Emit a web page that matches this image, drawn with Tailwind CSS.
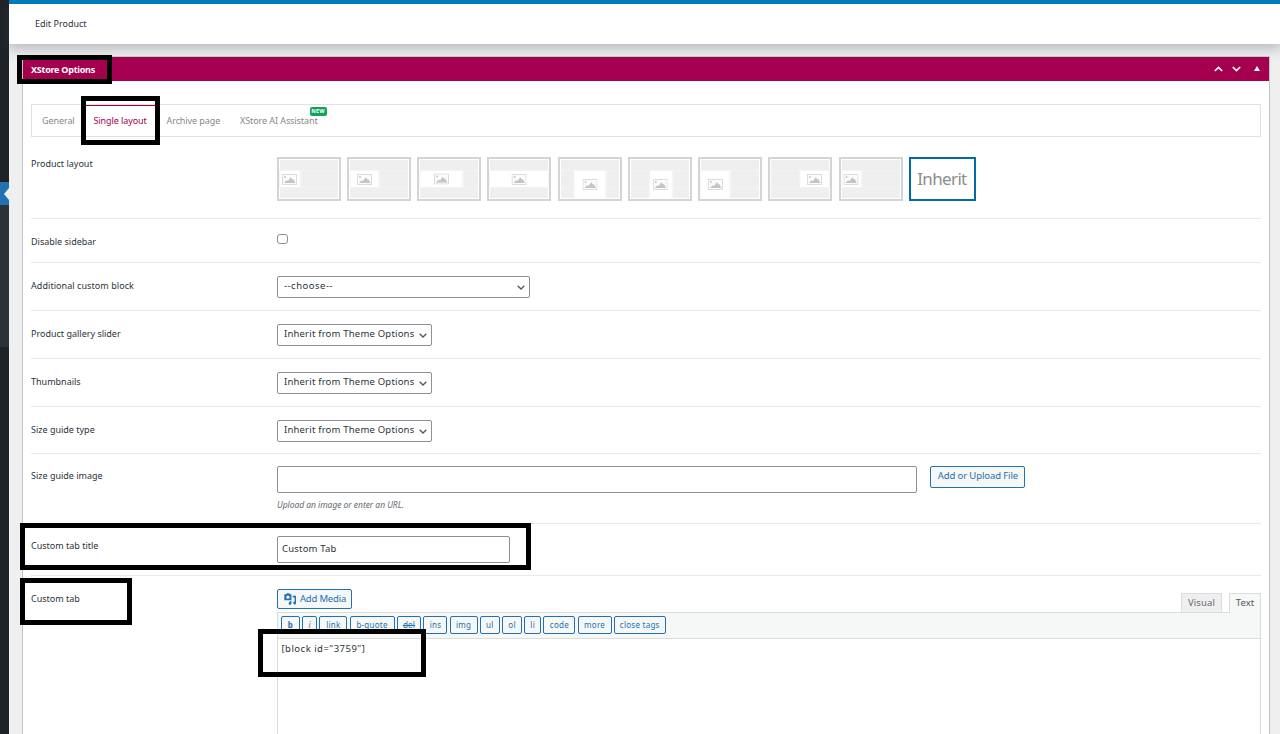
<!DOCTYPE html>
<html lang="en">
<head>
    <meta charset="UTF-8">
    <meta name="viewport" content="width=device-width, initial-scale=1.0">
    <title>Edit Product</title>
    <script src="https://cdn.jsdelivr.net/npm/@tailwindcss/browser@4"></script>
</head>
<body class="bg-[#efeff0] text-[#2c3338] font-['Noto_Sans',sans-serif] text-[9px] leading-[12px]">
    <!-- icons -->
    <svg class="hidden">
        <symbol id="pic" viewBox="0 0 15 11">
            <rect x="0.5" y="0.5" width="14" height="10" fill="#fbfbfb" stroke="#dcdcdc"/>
            <circle cx="3" cy="3" r="0.9" fill="#c4c4c4"/>
            <path d="M2 9L4.7 6.2L6 7L8.8 3.2L10.4 5.6L11.2 5L13.4 9Z" fill="#c4c4c4"/>
        </symbol>
        <symbol id="arrow" viewBox="0 0 8 5">
            <path d="M0.7 0.8L4 4L7.3 0.8" fill="none" stroke="#50575e" stroke-width="1.3"/>
        </symbol>
    </svg>
    <div class="relative flex w-[1280px] h-[734px] overflow-hidden">
        <!-- admin menu edge -->
        <div class="w-[9px] shrink-0 flex flex-col bg-[#1d2327]">
            <div class="h-[182px]"></div>
            <div class="h-[23px] bg-[#2271b1] flex items-center justify-end">
                <svg class="w-[5px] h-[12px]" viewBox="0 0 5 12"><path d="M5 0V12L0 6Z" fill="#efeff0"/></svg>
            </div>
            <div class="h-[142px] bg-[#2c3338]"></div>
        </div>
        <div class="flex-1 flex flex-col">
            <div class="h-[44px] shrink-0 border-t-4 border-[#007cba] bg-white flex items-center pl-[26px] shadow-[0_3px_12px_2px_rgba(60,65,80,0.3)]">
                <span>Edit Product</span>
            </div>
            <div class="ml-[13px] mr-[10px] mt-[12px] flex-1 flex flex-col border border-b-0 border-[#c3c4c7] bg-white">
                <div class="h-[24px] shrink-0 bg-[#a4004f] text-white flex items-center pl-[8px] pr-[9px]">
                    <span class="font-bold text-[9px] tracking-[-0.25px] flex-1 pt-[1px]">XStore Options</span>
                    <svg class="w-[9px] h-[6px] mr-[9px]" viewBox="0 0 9 6"><path d="M0.8 5L4.5 1.4L8.2 5" fill="none" stroke="#fff" stroke-width="1.7"/></svg>
                    <svg class="w-[9px] h-[6px] mr-[13px]" viewBox="0 0 9 6"><path d="M0.8 1L4.5 4.6L8.2 1" fill="none" stroke="#fff" stroke-width="1.7"/></svg>
                    <svg class="w-[6px] h-[5px] mb-[1px]" viewBox="0 0 6 5"><path d="M0 5L3 0L6 5Z" fill="#fff"/></svg>
                </div>
                <div class="px-[8px] pt-[23px] flex flex-col">
                    <!-- tabs -->
                    <div class="h-[33px] border border-[#e1e1e1] flex items-center text-[#888] tracking-[-0.08px]">
                        <span class="w-[51.5px] pl-[10px]">General</span>
                        <span class="w-[73px] pl-[10px] h-[31px] flex items-center border-t border-[#a4004f] text-[#a4004f] whitespace-nowrap">Single layout</span>
                        <span class="w-[73.5px] pl-[10px] whitespace-nowrap">Archive page</span>
                        <span class="relative pl-[10px] whitespace-nowrap">XStore AI Assistant
                            <span class="absolute left-[79.5px] top-[-8px] w-[17px] h-[9px] rounded-[2px] bg-[#0fa35b] text-white text-[5.5px] leading-[9px] font-bold text-center tracking-[0.2px]">NEW</span>
                        </span>
                    </div>

                    <div class="h-[82px] border-b border-[#e9e9ea] flex">
                        <div class="w-[245.7px] pt-[21px]">Product layout</div>
                        <div class="flex gap-[6.25px] pt-[20px]">
                            <div id="layouts" class="flex gap-[6.25px]"></div>
                            <div class="w-[67px] h-[44px] border-2 border-[#016ba8] text-[#8c8c8c] text-[17px] tracking-[-0.65px] flex items-center justify-center pr-[1px]">Inherit</div>
                        </div>
                    </div>

                    <div class="h-[44px] border-b border-[#e9e9ea] flex">
                        <div class="w-[245.5px] pt-[17px]">Disable sidebar</div>
                        <div class="w-[11px] h-[10px] mt-[15px] border border-[#8c8f94] rounded-[3px]"></div>
                    </div>

                    <div class="h-[48px] border-b border-[#e9e9ea] flex">
                        <div class="w-[246px] pt-[17px] tracking-[0.06px]">Additional custom block</div>
                        <div class="w-[253px] h-[22px] mt-[13px] border border-[#8c8f94] rounded-[2px] flex items-center justify-between pl-[6px] pr-[4px] text-[9.5px] tracking-[0.5px]"><span class="pb-[2px]">--choose--</span>
                            <svg class="w-[8px] h-[5px] mt-[1px]"><use href="#arrow"/></svg>
                        </div>
                    </div>

                    <div class="h-[48px] border-b border-[#e9e9ea] flex">
                        <div class="w-[246px] pt-[17px]">Product gallery slider</div>
                        <div class="w-[155px] h-[22px] mt-[13px] border border-[#8c8f94] rounded-[2px] flex items-center justify-between pl-[6px] pr-[4px] text-[9.5px] tracking-[0.2px] whitespace-nowrap"><span class="pb-[2px]">Inherit from Theme Options</span>
                            <svg class="w-[8px] h-[5px] mt-[1px]"><use href="#arrow"/></svg>
                        </div>
                    </div>

                    <div class="h-[48px] border-b border-[#e9e9ea] flex">
                        <div class="w-[246px] pt-[17px]">Thumbnails</div>
                        <div class="w-[155px] h-[22px] mt-[13px] border border-[#8c8f94] rounded-[2px] flex items-center justify-between pl-[6px] pr-[4px] text-[9.5px] tracking-[0.2px] whitespace-nowrap"><span class="pb-[2px]">Inherit from Theme Options</span>
                            <svg class="w-[8px] h-[5px] mt-[1px]"><use href="#arrow"/></svg>
                        </div>
                    </div>

                    <div class="h-[47px] border-b border-[#e9e9ea] flex">
                        <div class="w-[246px] pt-[17px]">Size guide type</div>
                        <div class="w-[155px] h-[22px] mt-[13px] border border-[#8c8f94] rounded-[2px] flex items-center justify-between pl-[6px] pr-[4px] text-[9.5px] tracking-[0.2px] whitespace-nowrap"><span class="pb-[2px]">Inherit from Theme Options</span>
                            <svg class="w-[8px] h-[5px] mt-[1px]"><use href="#arrow"/></svg>
                        </div>
                    </div>

                    <div class="h-[70px] border-b border-[#e9e9ea] flex">
                        <div class="w-[246px] pt-[16px]">Size guide image</div>
                        <div class="pt-[12px]">
                            <div class="w-[640px] h-[27px] border border-[#8c8f94] rounded-[2px]"></div>
                            <div class="mt-[6px] italic text-[8.5px] tracking-[-0.05px] text-[#646970]">Upload an image or enter an URL.</div>
                        </div>
                        <div class="ml-[13.4px] mt-[12px] w-[95px] h-[22px] border border-[#2271b1] rounded-[2px] bg-[#f6f7f7] text-[#2271b1] flex items-center justify-center text-[9.5px] tracking-[-0.1px] pb-[2px]">Add or Upload File</div>
                    </div>

                    <div class="h-[52px] border-b border-[#e9e9ea] flex">
                        <div class="w-[246px] pt-[16px]">Custom tab title</div>
                        <div class="w-[233px] h-[27px] mt-[12px] border border-[#8c8f94] rounded-[2px] flex items-center pl-[4px] pb-[1px] text-[9.5px] tracking-[0.2px]">Custom Tab</div>
                    </div>

                    <div class="flex">
                        <div class="w-[245.5px] pt-[17px] shrink-0">Custom tab</div>
                        <div class="flex-1">
                            <div class="flex h-[36px] pt-[13px]">
                                <div class="w-[75px] h-[20px] border border-[#2271b1] rounded-[2px] bg-[#f6f7f7] text-[#2271b1] flex items-center pl-[6px] gap-[4.5px] text-[9.5px] tracking-[-0.2px] whitespace-nowrap">
                                    <svg class="w-[12px] h-[12px] shrink-0" viewBox="0 0 11 11" fill="#2271b1">
                                        <path fill-rule="evenodd" d="M1 1.2H2L2.6 0.2H4.8L5.4 1.2H6.8V6.6H0.3V1.2ZM3.6 2.3A1.5 1.5 0 1 0 3.6 5.3A1.5 1.5 0 1 0 3.6 2.3Z"/>
                                        <path d="M8 2.6H11V9A1.3 1.3 0 1 1 9.7 7.9V4.2H8ZM5.4 7.4H6.8V9.4A1.3 1.3 0 1 1 5.4 8.3Z"/>
                                    </svg>
                                    Add Media
                                </div>
                                <div class="flex-1"></div>
                                <div class="mt-[4px] w-[41px] h-[19px] border border-b-0 border-[#dcdcde] bg-[#efeff0] text-[#646970] flex items-center justify-center text-[9.5px] tracking-[0.1px]">Visual</div>
                                <div class="mt-[4px] ml-[7px] w-[32px] h-[20px] border border-b-0 border-[#dcdcde] bg-[#f6f7f7] text-[#50575e] flex items-center justify-center text-[9.5px] tracking-[0.1px] pb-[1px] z-10">Text</div>
                            </div>
                            <div class="border border-[#dcdcde]">
                                <div class="h-[26px] border-b border-[#dcdcde] bg-[#f6f7f7] pl-[3.5px] pt-[3px]">
                                    <div class="flex gap-[2.2px] text-[#2271b1] text-[8px] tracking-[0.25px]">
                                        <span class="w-[19px] h-[18px] border border-[#2271b1] rounded-[2px] flex items-center justify-center font-bold">b</span>
                                        <span class="w-[15px] h-[18px] border border-[#2271b1] rounded-[2px] flex items-center justify-center italic">i</span>
                                        <span class="w-[28px] h-[18px] border border-[#2271b1] rounded-[2px] flex items-center justify-center underline">link</span>
                                        <span class="w-[45px] h-[18px] border border-[#2271b1] rounded-[2px] flex items-center justify-center">b-quote</span>
                                        <span class="w-[24.5px] h-[18px] border border-[#2271b1] rounded-[2px] flex items-center justify-center line-through">del</span>
                                        <span class="w-[24px] h-[18px] border border-[#2271b1] rounded-[2px] flex items-center justify-center">ins</span>
                                        <span class="w-[28px] h-[18px] border border-[#2271b1] rounded-[2px] flex items-center justify-center">img</span>
                                        <span class="w-[20px] h-[18px] border border-[#2271b1] rounded-[2px] flex items-center justify-center">ul</span>
                                        <span class="w-[20px] h-[18px] border border-[#2271b1] rounded-[2px] flex items-center justify-center">ol</span>
                                        <span class="w-[17px] h-[18px] border border-[#2271b1] rounded-[2px] flex items-center justify-center">li</span>
                                        <span class="w-[32px] h-[18px] border border-[#2271b1] rounded-[2px] flex items-center justify-center">code</span>
                                        <span class="w-[34px] h-[18px] border border-[#2271b1] rounded-[2px] flex items-center justify-center">more</span>
                                        <span class="w-[52px] h-[18px] border border-[#2271b1] rounded-[2px] flex items-center justify-center whitespace-nowrap">close tags</span>
                                    </div>
                                </div>
                                <div class="h-[110px] pl-[4px] pt-[4px] text-[9.5px] tracking-[0.48px]">[block id="3759"]</div>
                            </div>
                        </div>
                    </div>
                </div>
            </div>
        </div>
        <!-- highlight boxes over the page -->
        <div class="absolute left-[17px] top-[55px] w-[95px] h-[29px] border-5 border-black"></div>
        <div class="absolute left-[81px] top-[96px] w-[79px] h-[49px] border-5 border-black"></div>
        <div class="absolute left-[20px] top-[523px] w-[511px] h-[47px] border-5 border-black"></div>
        <div class="absolute left-[20px] top-[578px] w-[112px] h-[47px] border-5 border-black"></div>
        <div class="absolute left-[258px] top-[629px] w-[168px] h-[48px] border-5 border-black"></div>
    </div>
    <script>
        // white area (x, y, width, height) and icon position for every layout
        const layouts = [
            { area: [3, 14, 19.5, 16], icon: [5, 17] },
            { area: [3.5, 14, 27.5, 16], icon: [10, 17] },
            { area: [3.5, 14, 41.5, 16], icon: [17, 16.5] },
            { area: [3, 14, 58, 16], icon: [24.5, 17] },
            { area: [16.7, 14, 30.3, 27], icon: [24.5, 22] },
            { area: [22, 14, 21.7, 27], icon: [24.7, 22] },
            { area: [3.5, 14, 27.8, 27], icon: [10, 22] },
            { area: [32.3, 14, 28.5, 16], icon: [39, 17] },
            { area: [4, 14, 17.7, 16], icon: [4.5, 17] }
        ];
        const list = document.getElementById('layouts');
        for (let i = 0; i < layouts.length; i++) {
            const [x, y, w, h] = layouts[i].area;
            const [ix, iy] = layouts[i].icon;
            list.innerHTML += `
                <svg class="w-[64px] h-[44px]" viewBox="0 0 64 44">
                    <rect x="1" y="1" width="62" height="42" fill="#fff" stroke="#d4d4d4" stroke-width="2"/>
                    <rect x="3" y="3" width="58" height="38" fill="#efefef"/>
                    <path d="M3 13.5H61M3 30.5H61" stroke="#f3f3f3"/>
                    <rect x="${x - 1}" y="${y - 1}" width="${w + 3}" height="${h + 1}" fill="#f5f5f5"/>
                    <rect x="${x}" y="${y}" width="${w}" height="${h}" fill="#fff"/>
                    <use href="#pic" x="${ix}" y="${iy}" width="15" height="11"/>
                    <rect x="1" y="1" width="62" height="42" fill="none" stroke="#d4d4d4" stroke-width="2"/>
                </svg>`;
        }
    </script>
</body>
</html>
